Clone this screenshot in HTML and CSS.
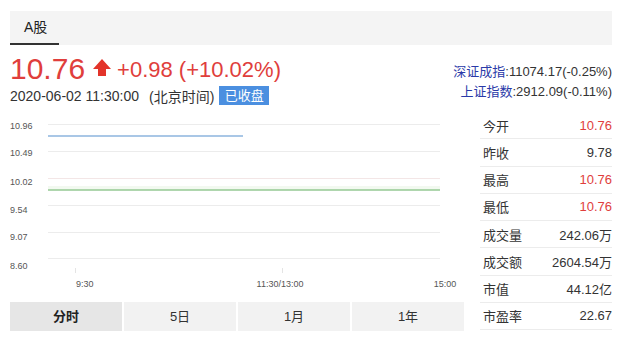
FILE: index.html
```html
<!DOCTYPE html>
<html lang="zh-CN">
<head>
<meta charset="utf-8">
<title>A股行情</title>
<link rel="stylesheet" href="styles.css">
</head>
<body>
<div class="page">
  <div class="tabbar">
    <div class="tabbar-item">A股</div>
  </div>

  <div class="quote">
    <div class="quote-main">
      <div class="price-line">
        <span class="price">10.76</span>
        <svg class="arrow" width="18" height="18" viewBox="0 0 18 18"><path d="M9 0 L18 10 L13 10 L13 17 L5 17 L5 10 L0 10 Z" fill="#e3342a"/></svg>
        <span class="change">+0.98 (+10.02%)</span>
      </div>
      <div class="date-line">
        <span class="date">2020-06-02 11:30:00</span>
        <span class="tz">(北京时间)</span>
        <span class="badge">已收盘</span>
      </div>
    </div>
    <div class="indices">
      <div class="index-line"><span class="index-name">深证成指</span>:11074.17(-0.25%)</div>
      <div class="index-line"><span class="index-name">上证指数</span>:2912.09(-0.11%)</div>
    </div>
  </div>

  <div class="main">
    <div class="chart-col">
      <svg class="chart" width="454" height="186" viewBox="0 0 454 186">
        <g stroke="#ececec" stroke-width="1">
          <line x1="38" y1="12.5" x2="430" y2="12.5"/>
          <line x1="38" y1="39.5" x2="430" y2="39.5"/>
          <line x1="38" y1="66.5" x2="430" y2="66.5" stroke="#f3e6e6"/>
          <line x1="38" y1="93.5" x2="430" y2="93.5"/>
          <line x1="38" y1="120.5" x2="430" y2="120.5"/>
          <line x1="38" y1="146.5" x2="430" y2="146.5"/>
        </g>
        <rect x="38" y="74" width="392" height="4" fill="#f2f9f0"/>
        <line x1="38" y1="24" x2="233" y2="24" stroke="#a9c7e6" stroke-width="2"/>
        <line x1="38" y1="78" x2="430" y2="78" stroke="#94c993" stroke-width="1.6"/>
        <g stroke="#e4e4e4" stroke-width="1">
          <line x1="65.5" y1="156" x2="65.5" y2="161"/>
          <line x1="272.5" y1="156" x2="272.5" y2="161"/>
        </g>
        <g class="axis-y" font-size="9" fill="#555">
          <text x="0" y="16.5">10.96</text>
          <text x="0" y="44">10.49</text>
          <text x="0" y="72.5">10.02</text>
          <text x="0" y="100.5">9.54</text>
          <text x="0" y="128">9.07</text>
          <text x="0" y="157">8.60</text>
        </g>
        <g class="axis-x" font-size="9" fill="#555">
          <text x="66" y="175">9:30</text>
          <text x="270" y="175" text-anchor="middle">11:30/13:00</text>
          <text x="435" y="175" text-anchor="middle">15:00</text>
        </g>
      </svg>
      <div class="periods">
        <div class="period active">分时</div>
        <div class="period">5日</div>
        <div class="period">1月</div>
        <div class="period">1年</div>
      </div>
    </div>

    <div class="stats">
      <div class="row"><span>今开</span><span class="up">10.76</span></div>
      <div class="row"><span>昨收</span><span>9.78</span></div>
      <div class="row"><span>最高</span><span class="up">10.76</span></div>
      <div class="row"><span>最低</span><span class="up">10.76</span></div>
      <div class="row"><span>成交量</span><span>242.06万</span></div>
      <div class="row"><span>成交额</span><span>2604.54万</span></div>
      <div class="row"><span>市值</span><span>44.12亿</span></div>
      <div class="row"><span>市盈率</span><span>22.67</span></div>
    </div>
  </div>
</div>
</body>
</html>
```

FILE: styles.css
```css
* { box-sizing: border-box; }

body {
  margin: 0;
  background: #fff;
  font-family: "Liberation Sans", "Noto Sans CJK SC", sans-serif;
  color: #333;
}

.page {
  width: 640px;
  padding: 11px 28px 0 10px;
}

.tabbar {
  height: 34px;
  background: #f4f4f4;
  display: flex;
}

.tabbar-item {
  width: 49px;
  padding-left: 14px;
  line-height: 32px;
  font-size: 14px;
  color: #222;
  border-bottom: 2px solid #333;
}

.quote {
  display: flex;
  justify-content: space-between;
  margin-top: 7px;
}

.price-line {
  display: flex;
  align-items: center;
  height: 34px;
  color: #e03e3c;
}

.price {
  font-size: 30px;
  line-height: 34px;
}

.arrow {
  margin: 0 6px 0 8px;
  position: relative;
  top: -1px;
}

.change {
  font-size: 22px;
  line-height: 34px;
  position: relative;
  top: 1px;
}

.date-line {
  display: flex;
  align-items: center;
  height: 19px;
  font-size: 14px;
  color: #333;
}

.tz {
  margin-left: 10px;
}

.badge {
  margin-left: 5px;
  width: 50px;
  height: 19px;
  line-height: 19px;
  text-align: center;
  background: #4b8fe0;
  color: #fff;
  font-size: 13px;
}

.indices {
  padding-top: 10px;
  text-align: right;
  font-size: 13px;
  color: #333;
}

.index-line {
  line-height: 20px;
}

.index-name {
  color: #2a3aa8;
}

.main {
  display: flex;
  margin-top: 7px;
}

.chart-col {
  width: 454px;
}

.chart {
  display: block;
}

.chart text {
  font-family: "Liberation Sans", sans-serif;
}

.periods {
  display: flex;
  gap: 2px;
  margin-top: 4px;
}

.period {
  flex: 1;
  height: 29px;
  line-height: 29px;
  text-align: center;
  background: #f2f2f2;
  font-size: 13px;
  color: #333;
}

.period.active {
  background: #e6e6e6;
  font-weight: bold;
  color: #222;
}

.stats {
  width: 132px;
  margin-left: 16px;
}

.row {
  display: flex;
  justify-content: space-between;
  align-items: center;
  height: 27.25px;
  padding-left: 3px;
  border-bottom: 1px solid #ececec;
  font-size: 13px;
  color: #333;
}

.row .up {
  color: #e03e3c;
}
```
